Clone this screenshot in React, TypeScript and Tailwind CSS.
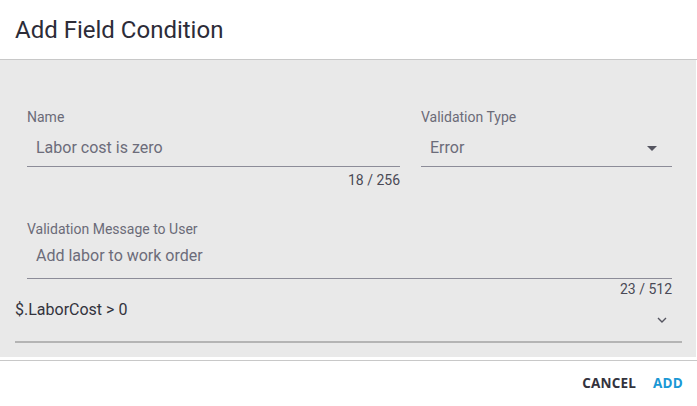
export default function App() {
  return (
    <div className="w-[697px] h-[406px] bg-white font-['Roboto',sans-serif] overflow-hidden">
      <div className="h-[59px] flex items-center px-[15px]">
        <h1 className="text-[24px] font-normal text-[#2c2c38] leading-none">Add Field Condition</h1>
      </div>
      <div className="h-px bg-[#c8c8c8]" />
      <div className="h-[297px] w-[696px] bg-[#e9e9e9] pt-[49px]">
        <div className="flex pl-[27px] pr-[24px] gap-[21px]">
          <div className="w-[373px]">
            <div className="text-[14px] leading-[16px] text-[#6b6b78]">Name</div>
            <div className="pt-[13px] pb-[8px] pl-[9px] border-b border-[#8c8c98] text-[16px] leading-[20px] text-[#6c6c7a]">
              Labor cost is zero
            </div>
            <div className="mt-[5px] text-right text-[14px] leading-[16px] text-[#4a4a56]">18 / 256</div>
          </div>
          <div className="flex-1">
            <div className="text-[14px] leading-[16px] text-[#6b6b78]">Validation Type</div>
            <div className="pt-[13px] pb-[8px] pl-[9px] pr-[15px] border-b border-[#8c8c98] flex items-center justify-between text-[16px] leading-[20px] text-[#6c6c7a]">
              <span>Error</span>
              <svg width="10" height="5" viewBox="0 0 10 5">
                <path d="M0 0 L10 0 L5 5 Z" fill="#555560" />
              </svg>
            </div>
          </div>
        </div>
        <div className="mt-[33px] pl-[27px] pr-[24px]">
          <div className="text-[14px] leading-[16px] text-[#6b6b78]">Validation Message to User</div>
          <div className="pt-[9px] pb-[12px] pl-[9px] border-b border-[#8c8c98] text-[16px] leading-[20px] text-[#6c6c7a]">
            Add labor to work order
          </div>
          <div className="mt-[2px] text-right text-[14px] leading-[16px] text-[#4a4a56]">23 / 512</div>
        </div>
        <div className="mt-[3px] ml-[15px] w-[667px] h-[43px] border-b-2 border-[#b4b4b4] flex items-start justify-between">
          <span className="text-[16px] leading-[20px] text-[#33333d]">$.LaborCost &gt; 0</span>
          <svg className="mt-[16px] mr-[15px]" width="10" height="8" viewBox="0 0 10 8">
            <path d="M1 2 L5 6 L9 2" fill="none" stroke="#555560" strokeWidth="1.4" />
          </svg>
        </div>
      </div>
      <div className="h-[3px]" />
      <div className="h-px bg-[#c8c8c8]" />
      <div className="h-[45px] flex items-center justify-end pr-[14px] gap-[17px] font-['Open_Sans',sans-serif] font-bold text-[13.5px] tracking-[0.2px]">
        <button className="text-[#33333d]">CANCEL</button>
        <button className="text-[#1a98d5]">ADD</button>
      </div>
    </div>
  );
}
